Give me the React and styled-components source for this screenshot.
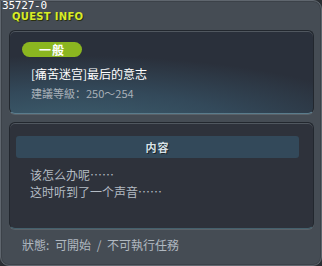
import React from "react";
import styled, { createGlobalStyle } from "styled-components";

const Global = createGlobalStyle`
  html, body { margin: 0; padding: 0; background: #2a2e33; }
  body { font-family: "Noto Sans CJK SC", "DejaVu Sans", sans-serif; }
`;

const Window = styled.div`
  position: relative;
  box-sizing: border-box;
  width: 322px;
  height: 266px;
  background: #454c54;
  border: 1px solid #5f666e;
  border-radius: 0 9px 9px 9px;
  box-shadow: inset 0 0 0 1px #3c4249;
  display: flex;
  flex-direction: column;
  padding: 0 7px 0 8px;
`;

const IdLabel = styled.div`
  position: absolute;
  left: 1px;
  top: -1px;
  font-family: "DejaVu Sans Mono", monospace;
  font-size: 11px;
  line-height: 12px;
  color: #ffffff;
  letter-spacing: -0.2px;
`;

const Title = styled.div`
  margin: 10px 0 0 3px;
  height: 12px;
  font-family: "DejaVu Sans", sans-serif;
  font-weight: bold;
  font-size: 10px;
  line-height: 12px;
  color: #d8ec2a;
  letter-spacing: 0.3px;
  text-shadow: 1px 1px 0 #2a3010;
`;

const Panel = styled.div`
  box-sizing: border-box;
  border-radius: 6px;
  border: 1px solid #22272e;
  box-shadow: inset 0 1px 0 #50575f, 0 1px 0 #5a6168;
`;

const InfoPanel = styled(Panel)`
  margin-top: 7px;
  height: 84px;
  background: radial-gradient(ellipse 140% 120% at 20% 120%, #3e6070 0%, #33495a 40%, #2a303b 75%);
  padding: 11px 0 0 12px;
  border-bottom-color: #5a7c8c;
`;

const Badge = styled.div`
  width: 60px;
  height: 15px;
  border-radius: 8px;
  background: #8bb620;
  color: #ffffff;
  font-size: 12px;
  font-weight: bold;
  line-height: 15px;
  text-align: center;
  letter-spacing: 1px;
`;

const QuestName = styled.div`
  margin: 9px 0 0 9px;
  color: #ffffff;
  font-size: 12px;
  line-height: 16px;
`;

const Level = styled.div`
  margin: 4px 0 0 9px;
  color: #a8b0b8;
  font-size: 11px;
  line-height: 14px;
`;

const ContentPanel = styled(Panel)`
  margin-top: 8px;
  height: 107px;
  background: #2e323b;
  padding: 13px 14px 0 6px;
  border-bottom-color: #44606c;
`;

const ContentHeader = styled.div`
  height: 22px;
  border-radius: 3px;
  background: #33495a;
  color: #d8e2e8;
  font-weight: bold;
  font-size: 11px;
  line-height: 22px;
  text-align: center;
  letter-spacing: 1px;
  text-shadow: 1px 1px 0 #1a2228;
`;

const Lines = styled.div`
  margin: 8px 0 0 14px;
  color: #b4bcc4;
  font-size: 12px;
  line-height: 17px;
`;

const Status = styled.div`
  margin: 8px 0 0 13px;
  color: #b0b8c0;
  font-size: 12px;
  line-height: 16px;
  word-spacing: 3px;
`;

export default function App() {
  return (
    <>
      <Global />
      <Window>
        <IdLabel>35727-0</IdLabel>
        <Title>QUEST INFO</Title>
        <InfoPanel>
          <Badge>一般</Badge>
          <QuestName>[痛苦迷宫]最后的意志</QuestName>
          <Level>建議等級：250～254</Level>
        </InfoPanel>
        <ContentPanel>
          <ContentHeader>内容</ContentHeader>
          <Lines>
            <div>该怎么办呢……</div>
            <div>这时听到了一个声音……</div>
          </Lines>
        </ContentPanel>
        <Status>狀態: 可開始 / 不可執行任務</Status>
      </Window>
    </>
  );
}
